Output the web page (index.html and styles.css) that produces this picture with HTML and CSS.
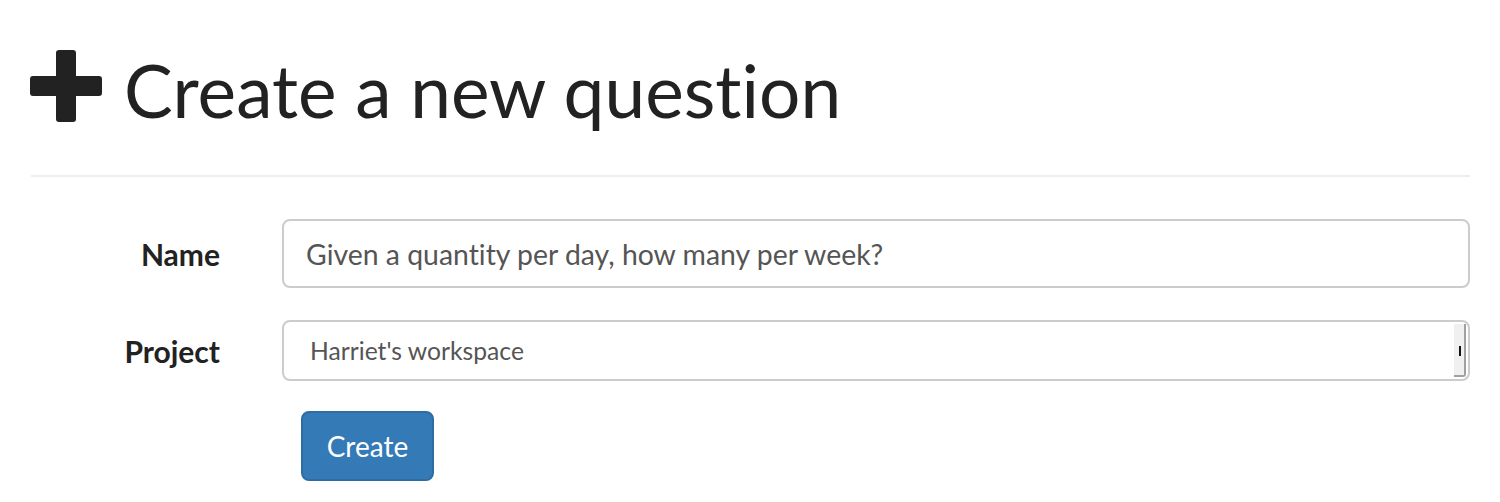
FILE: index.html
```html
<!DOCTYPE html>
<html>
<head>
<meta charset="utf-8">
<link rel="stylesheet" href="styles.css">
</head>
<body>
<div class="page">
  <h1 class="title">
    <svg class="plus" viewBox="0 0 72 72" width="72" height="72"><path d="M26 3 a3 3 0 0 1 3 -3 h14 a3 3 0 0 1 3 3 v23 h23 a3 3 0 0 1 3 3 v14 a3 3 0 0 1 -3 3 h-23 v23 a3 3 0 0 1 -3 3 h-14 a3 3 0 0 1 -3 -3 v-23 h-23 a3 3 0 0 1 -3 -3 v-14 a3 3 0 0 1 3 -3 h23 z" fill="#222"/></svg>
    <span>Create a new question</span>
  </h1>
  <hr class="rule">
  <form class="form">
    <div class="row">
      <label class="label">Name</label>
      <div class="input">Given a quantity per day, how many per week?</div>
    </div>
    <div class="row">
      <label class="label">Project</label>
      <div class="select">
        <span class="opt">Harriet's workspace</span>
        <div class="bar"><div class="thumb"></div></div>
      </div>
    </div>
    <div class="row">
      <div></div>
      <div class="actions"><button type="button" class="btn">Create</button></div>
    </div>
  </form>
</div>
</body>
</html>
```
FILE: styles.css
```css
html, body { margin: 0; padding: 0; background: #fff; }
body { font-family: "Lato", "Liberation Sans", sans-serif; color: #222; font-variant-ligatures: none; }
.page { padding: 0 30px 0 31px; }
.title { display: flex; align-items: center; gap: 22px; margin: 0; padding-top: 50px; height: 72px; font-weight: 400; font-size: 73px; color: #222; line-height: 72px; }
.plus { display: block; flex: none; margin-left: -1px; }
.title span { position: relative; top: 4px; }
.rule { border: 0; border-top: 2px solid #eee; margin: 53px 0 0; }
.form { margin-top: 42px; }
.row { display: grid; grid-template-columns: 189px 1fr; column-gap: 62px; align-items: center; margin-bottom: 32px; }
.label { text-align: right; font-weight: 700; font-size: 30px; color: #222; }
.input { height: 65px; border: 2px solid #ccc; border-radius: 8px; box-sizing: content-box; padding: 0 22px; display: flex; align-items: center; font-size: 28.4px; color: #555; }
.select { position: relative; height: 57px; border: 2px solid #ccc; border-radius: 8px; padding: 0 0 0 26px; display: flex; align-items: center; font-size: 24.7px; color: #555; }
.opt { flex: 1; }
.bar { position: absolute; right: 2px; top: 2px; bottom: 2px; width: 10px; background: #f0f0f0; border-right: 2px solid #a0a0a0; border-bottom: 2px solid #a0a0a0; border-bottom-right-radius: 3px; }
.thumb { position: absolute; left: 5px; top: 22px; width: 2px; height: 10px; background: #111; }
.actions { padding-left: 19px; margin-top: -2px; }
.btn { font-family: inherit; font-size: 28px; color: #fff; background: #337ab7; border: 2px solid #2e6da4; border-radius: 8px; width: 133px; height: 70px; padding: 0; }
```
